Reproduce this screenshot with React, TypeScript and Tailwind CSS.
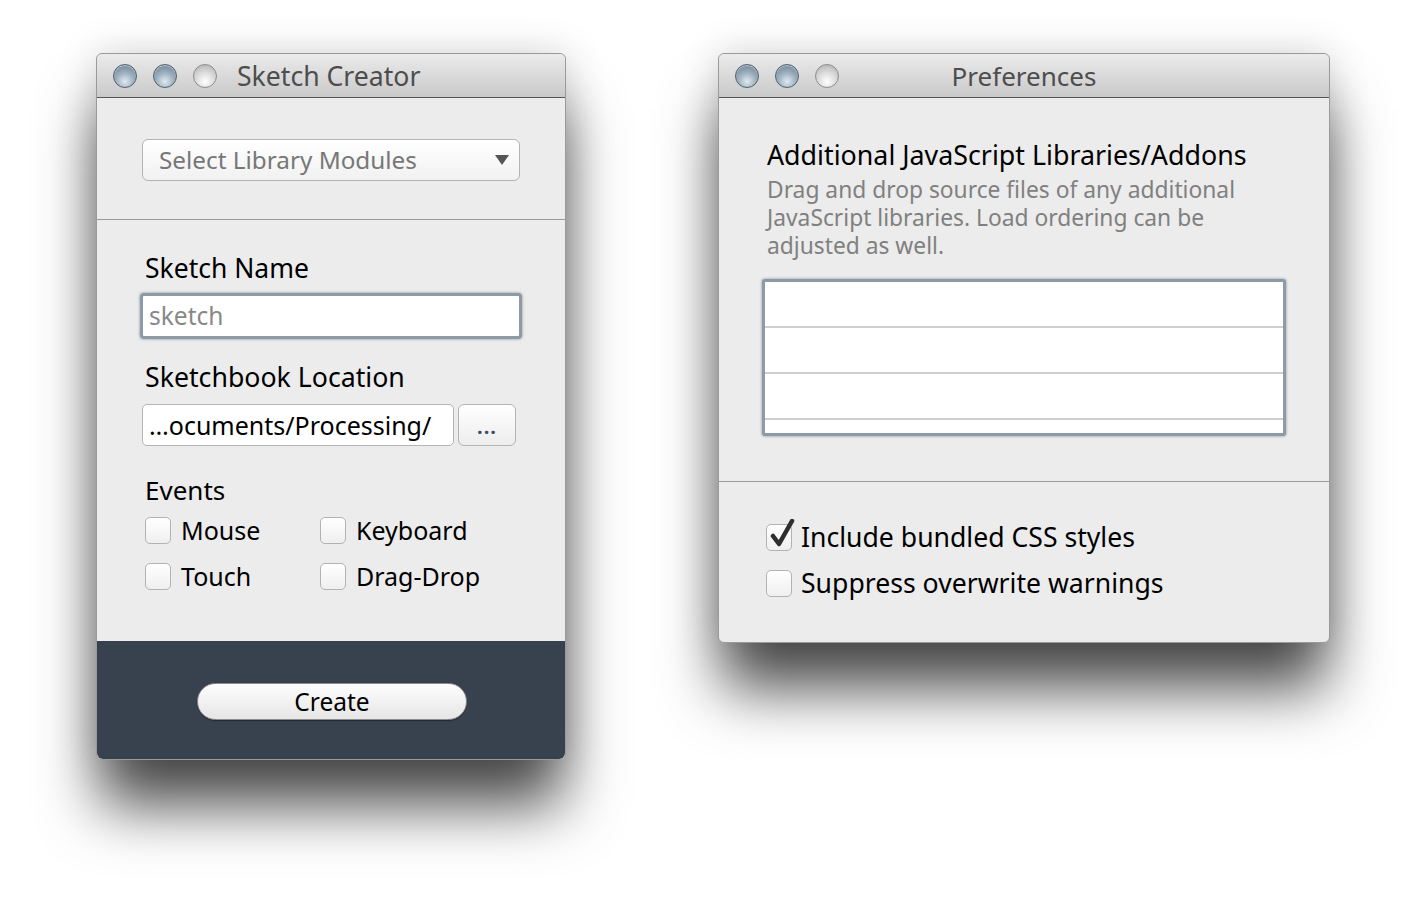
import React from 'react';

const FONT = "font-['Lucida_Grande','Noto_Sans','DejaVu_Sans',sans-serif]";
const WINDOW_SHADOW = 'shadow-[0_50px_60px_-4px_rgba(0,0,0,0.7),0_0_40px_rgba(0,0,0,0.16)]';

const TrafficLights = () => (
  <div className="flex items-center gap-[16px]">
    <span className="w-[24px] h-[24px] rounded-full border border-[#4f5f6c] bg-[radial-gradient(circle_at_50%_75%,#dfe9f0_0%,#9cb0bf_45%,#63798a_100%)] shadow-[inset_0_1px_1px_rgba(255,255,255,0.6)]" />
    <span className="w-[24px] h-[24px] rounded-full border border-[#4f5f6c] bg-[radial-gradient(circle_at_50%_75%,#dfe9f0_0%,#9cb0bf_45%,#63798a_100%)] shadow-[inset_0_1px_1px_rgba(255,255,255,0.6)]" />
    <span className="w-[24px] h-[24px] rounded-full border border-[#8d8d8d] bg-[radial-gradient(circle_at_50%_75%,#ffffff_0%,#dcdcdc_45%,#acacac_100%)]" />
  </div>
);

const TitleBar = ({ title, center }: { title: string; center?: boolean }) => (
  <div className="relative h-[44px] flex items-center px-[16px] rounded-t-[6px] bg-[linear-gradient(#ebebeb,#c9c9c9)] border-b border-[#555]">
    <TrafficLights />
    {center ? (
      <span className="flex-1 text-center text-[26px] leading-[30px] text-[#4d4d4d] pr-[104px]">{title}</span>
    ) : (
      <span className="ml-[20px] text-[26.6px] leading-[30px] text-[#4d4d4d]">{title}</span>
    )}
  </div>
);

const Checkbox = ({ checked }: { checked?: boolean }) => (
  <span className="relative w-[26px] h-[27px] shrink-0 rounded-[5px] border border-[#b3b3b3] bg-[linear-gradient(#ffffff,#efefef)]">
    {checked && (
      <svg className="absolute left-[3px] top-[-6px]" width="26" height="30" viewBox="0 0 26 30">
        <path d="M3 17 L9 25 L22 2" fill="none" stroke="#2e2e2e" strokeWidth="4.5" strokeLinecap="round" strokeLinejoin="round" />
      </svg>
    )}
  </span>
);

const CheckItem = ({ label, checked, big }: { label: string; checked?: boolean; big?: boolean }) => (
  <label className="flex items-center">
    <Checkbox checked={checked} />
    <span className={big ? 'ml-[9px] text-[26.6px] leading-[30px] text-black' : 'ml-[10px] text-[25px] leading-[30px] text-black'}>
      {label}
    </span>
  </label>
);

const SketchCreator = () => (
  <div className={`w-[470px] rounded-[6px] bg-[#ececec] border border-[#9a9a9a] ${WINDOW_SHADOW}`}>
    <TitleBar title="Sketch Creator" />

    {/* library select */}
    <div className="px-[45px] pt-[41px] pb-[38px]">
      <div className="h-[42px] flex items-center justify-between pl-[16px] pr-[10px] rounded-[6px] border border-[#b4b4b4] bg-[linear-gradient(#ffffff,#f1f1f1)]">
        <span className="text-[24.3px] leading-[30px] text-[#777]">Select Library Modules</span>
        <svg width="14" height="10" viewBox="0 0 14 10">
          <path d="M0 0 H14 L7 10 Z" fill="#555" />
        </svg>
      </div>
    </div>
    <div className="h-px bg-[#9a9a9a]" />

    <div className="pl-[48px] pr-[44px] pt-[33px] h-[421px]">
      <div className="text-[26.5px] leading-[30px] text-black">Sketch Name</div>
      <div className="mt-[10px] -ml-[5px] w-[382px] h-[46px] rounded-[4px] border-[3px] border-[#8e9ba6] shadow-[0_0_3px_rgba(60,80,100,0.6)] bg-white flex items-center px-[6px]">
        <span className="text-[24.5px] leading-[30px] text-[#888]">sketch</span>
      </div>
      <div className="mt-[23px] text-[26.7px] leading-[30px] text-black">Sketchbook Location</div>
      <div className="mt-[12px] -ml-[3px] flex gap-[4px]">
        <div className="w-[312px] h-[42px] rounded-[5px] border border-[#b4b4b4] bg-white flex items-center px-[6px]">
          <span className="text-[25px] leading-[30px] text-black">…ocuments/Processing/</span>
        </div>
        <div className="w-[58px] h-[42px] rounded-[6px] border border-[#b4b4b4] bg-[linear-gradient(#ffffff,#ededed)] flex items-end justify-center pb-[8px]">
          <span className="text-[20px] leading-[20px] font-bold tracking-[1px] text-[#3d4f6a]">...</span>
        </div>
      </div>
      <div className="mt-[29px] text-[26px] leading-[30px] text-black">Events</div>
      <div className="mt-[10px] grid grid-cols-[175px_1fr] gap-y-[16px]">
        <CheckItem label="Mouse" />
        <CheckItem label="Keyboard" />
        <CheckItem label="Touch" />
        <CheckItem label="Drag-Drop" />
      </div>
    </div>

    {/* footer */}
    <div className="h-[118px] rounded-b-[6px] bg-[#37424e] flex items-start justify-center pt-[42px] pl-[2px]">
      <button className="w-[270px] h-[37px] rounded-full border border-[#8c8c8c] bg-[linear-gradient(#fdfdfd,#e6e6e6)] shadow-[0_1px_1px_rgba(0,0,0,0.4)] text-[24.5px] leading-[30px] text-black">
        Create
      </button>
    </div>
  </div>
);

const Preferences = () => (
  <div className={`w-[612px] rounded-[6px] bg-[#ececec] border border-[#9a9a9a] ${WINDOW_SHADOW}`}>
    <TitleBar title="Preferences" center />

    <div className="h-[383px] px-[43px] pt-[42px]">
      <div className="pl-[5px] text-[26.8px] leading-[30px] text-black">Additional JavaScript Libraries/Addons</div>
      <div className="pl-[5px] mt-[6px] text-[22.8px] leading-[28px] text-[#808080]">
        Drag and drop source files of any additional
        <br />
        JavaScript libraries. Load ordering can be
        <br />
        adjusted as well.
      </div>
      <div className="mt-[19px] h-[157px] rounded-[3px] border-[3px] border-[#8e9ba6] shadow-[0_0_3px_rgba(60,80,100,0.6)] bg-white overflow-hidden flex flex-col">
        <div className="h-[46px] shrink-0 border-b-2 border-[#cfcfcf]" />
        <div className="h-[46px] shrink-0 border-b-2 border-[#cfcfcf]" />
        <div className="h-[46px] shrink-0 border-b-2 border-[#cfcfcf]" />
      </div>
    </div>
    <div className="h-px bg-[#9a9a9a]" />

    <div className="h-[160px] pl-[47px] pt-[40px] flex flex-col gap-[16px]">
      <CheckItem label="Include bundled CSS styles" checked big />
      <CheckItem label="Suppress overwrite warnings" big />
    </div>
  </div>
);

const App: React.FC = () => {
  return (
    <div className={`${FONT} min-h-screen w-full bg-white flex items-start pt-[53px] pl-[96px] gap-[152px]`}>
      <SketchCreator />
      <Preferences />
    </div>
  );
};

export default App;
